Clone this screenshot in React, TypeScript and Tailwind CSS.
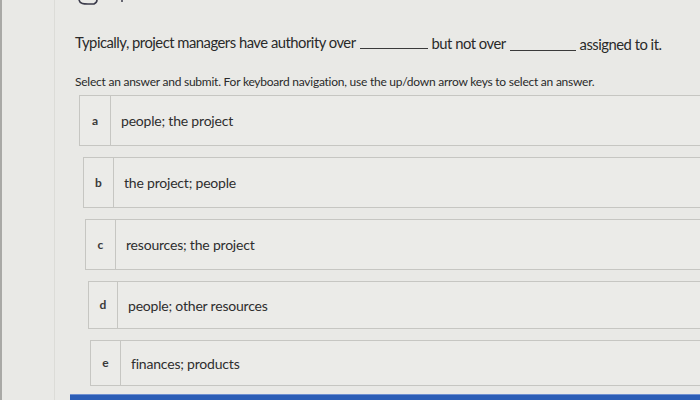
import React from "react";

const options = [
  { l: "a", t: "people; the project", ml: "ml-[77px]", h: "h-[51px]", div: "w-[31px]" },
  { l: "b", t: "the project; people", ml: "ml-[81px]", h: "h-[51px]", div: "w-[30px]" },
  { l: "c", t: "resources; the project", ml: "ml-[83px]", h: "h-[51px]", div: "w-[30px]" },
  { l: "d", t: "people; other resources", ml: "ml-[86px]", h: "h-[48px]", div: "w-[29px]" },
  { l: "e", t: "finances; products", ml: "ml-[88px]", h: "h-[46px]", div: "w-[30px]" },
];

export default function App() {
  return (
    <div
      className="w-[700px] h-[400px] overflow-hidden bg-[#e9e9e6] text-[#2e2e2e] flex flex-col relative border-l-2 border-[#a9a9a6]"
      style={{ fontFamily: "Lato, 'Open Sans', sans-serif" }}
    >
      <svg className="ml-[74px] shrink-0" width="60" height="5" viewBox="0 0 60 5">
        <path d="M3 0 C4 4 8 4 12 4 L18 4 C20 3 21 1 21 0" fill="none" stroke="#3a3a4a" strokeWidth="1.6" />
        <circle cx="46" cy="1" r="1" fill="#3a3a4a" />
      </svg>
      <div className="ml-[73px] mt-[27px] flex items-end whitespace-nowrap text-[14.8px] leading-[20px] tracking-[-0.5px] text-[#2a2a2a]">
        <span className="shrink-0">Typically, project managers have authority over</span>
        <span className="shrink-0 inline-block w-[68px] border-b border-[#3a3a3a] mx-[4px] mb-[3px]" />
        <span className="shrink-0 translate-y-[1px]">but not over</span>
        <span className="shrink-0 inline-block w-[66px] border-b border-[#3a3a3a] mx-[4px] mb-[1px]" />
        <span className="shrink-0 translate-y-[2px]">assigned to it.</span>
      </div>
      <div className="ml-[73px] mt-[22px] whitespace-nowrap text-[12px] leading-[16px] tracking-[-0.24px] text-[#2a2a2a]">
        Select an answer and submit. For keyboard navigation, use the up/down arrow keys to select an answer.
      </div>
      <div className="mt-[5px] flex flex-col gap-[11px]">
        {options.map((o) => (
          <div
            key={o.l}
            className={`${o.ml} ${o.h} w-[700px] shrink-0 flex border border-[#c6c6c2] bg-[#ebebe8]`}
          >
            <div className={`${o.div} flex items-center justify-center border-r border-[#c6c6c2] text-[12px] font-bold text-[#3a3a3a]`}>
              {o.l}
            </div>
            <div className="flex items-center pl-[10px] text-[14px] tracking-[-0.2px] text-[#2e2e2e]">
              {o.t}
            </div>
          </div>
        ))}
      </div>
      <div className="absolute left-[68px] right-0 top-[394px] h-[6px] bg-[#2b5db6] border-t border-[#6f8fd0]" />
      <div className="absolute left-[52px] top-0 bottom-0 w-px bg-[#dcdcd8]" />
    </div>
  );
}
